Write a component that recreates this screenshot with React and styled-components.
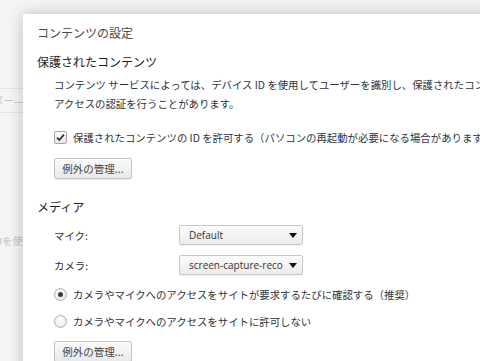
import React from 'react'
import styled, { createGlobalStyle } from 'styled-components'

const GlobalStyle = createGlobalStyle`
  html, body {
    margin: 0;
    padding: 0;
    background: #f4f4f4;
  }
  body {
    font-family: "Noto Sans CJK JP", "Open Sans", sans-serif;
  }
`

const Screen = styled.div`
  position: relative;
  width: 480px;
  height: 361px;
  overflow: hidden;
  background: #f4f4f4;
`

// page behind the overlay
const BackPage = styled.div`
  width: 23px;
  height: 100%;
  display: flex;
  flex-direction: column;
  overflow: hidden;
`

const BackField = styled.div`
  margin-top: 88px;
  height: 23px;
  border-top: 1px solid #e2e2e2;
  border-bottom: 1px solid #e2e2e2;
  display: flex;
  justify-content: flex-end;
  align-items: center;
  white-space: nowrap;
  font-size: 10.5px;
  color: #c4c4c4;
`

const BackText = styled.div`
  margin-top: 120px;
  display: flex;
  justify-content: flex-end;
  white-space: nowrap;
  font-size: 10.5px;
  color: #c4c4c4;
`

const Dialog = styled.div`
  position: absolute;
  left: 23px;
  top: 14px;
  width: 520px;
  height: 400px;
  background: #fff;
  box-shadow: 0 0 14px rgba(0, 0, 0, 0.22);
  padding: 9px 0 0 14px;
  box-sizing: border-box;
  display: flex;
  flex-direction: column;
  color: #2c333a;
`

const Title = styled.h1`
  margin: 0;
  font-size: 12px;
  font-weight: normal;
  line-height: 20px;
  color: #4a4a4a;
`

const Heading = styled.h2`
  margin: ${p => p.$top}px 0 0;
  font-size: 12px;
  font-weight: normal;
  line-height: 20px;
  color: #1e1e1e;
`

const Section = styled.div`
  padding-left: 17px;
  display: flex;
  flex-direction: column;
  font-size: 10.4px;
  white-space: nowrap;
`

const Para = styled.p`
  margin: 3px 0 0;
  line-height: 19px;
`

const CheckRow = styled.label`
  margin-top: ${p => p.$top}px;
  height: 20px;
  display: flex;
  align-items: center;
  gap: 6px;
`

const CheckBox = styled.span`
  width: 11px;
  height: 11px;
  border: 1px solid #a4a4a4;
  border-radius: 2px;
  background: linear-gradient(#fdfdfd, #e6e6e6);
  display: flex;
  align-items: center;
  justify-content: center;
  flex-shrink: 0;
`

const Radio = styled.span`
  width: 11px;
  height: 11px;
  border: 1px solid #b0b0b0;
  border-radius: 50%;
  background: radial-gradient(circle at 50% 35%, #ffffff, #e2e2e2);
  display: flex;
  align-items: center;
  justify-content: center;
  flex-shrink: 0;

  &::after {
    content: '';
    width: 5px;
    height: 5px;
    border-radius: 50%;
    background: ${p => (p.$on ? '#3a3a3a' : 'transparent')};
  }
`

const Button = styled.button`
  margin-top: ${p => p.$top}px;
  align-self: flex-start;
  width: 78px;
  height: 21px;
  padding: 0;
  border: 1px solid #c4c4c4;
  border-radius: 2px;
  background: linear-gradient(#fafafa, #e9e9e9);
  box-shadow: 0 1px 0 rgba(0, 0, 0, 0.06);
  font-family: "Noto Sans CJK JP", sans-serif;
  font-size: 10.5px;
  color: #444;
`

const FieldRow = styled.div`
  margin-top: ${p => p.$top}px;
  height: 20px;
  display: grid;
  grid-template-columns: 125px 124px;
  align-items: center;
`

const Select = styled.div`
  height: 20px;
  box-sizing: border-box;
  border: 1px solid #c8c8c8;
  border-radius: 2px;
  background: linear-gradient(#fbfbfb, #ececec);
  box-shadow: 0 1px 0 rgba(0, 0, 0, 0.05);
  display: flex;
  align-items: center;
  padding: 0 5px 0 9px;
  gap: 6px;
  font-family: "Open Sans", "Noto Sans CJK JP", sans-serif;
  font-size: 10px;
  color: #333;
`

const SelectText = styled.span`
  flex: 1;
  overflow: hidden;
  white-space: nowrap;
`

const Arrow = () => (
  <svg width="8" height="5" viewBox="0 0 8 5">
    <path d="M0 0h8L4 5z" fill="#111" />
  </svg>
)

const Check = () => (
  <svg width="9" height="9" viewBox="0 0 9 9">
    <path d="M1 4.6l2.3 2.4L8 1.6" fill="none" stroke="#333" strokeWidth="1.8" />
  </svg>
)

const App = () => {
  return (
    <Screen>
      <GlobalStyle />
      <BackPage>
        <BackField>ショッポー—</BackField>
        <BackText>IDを使</BackText>
      </BackPage>

      <Dialog>
        <Title>コンテンツの設定</Title>

        <Heading $top={9}>保護されたコンテンツ</Heading>
        <Section>
          <Para>
            コンテンツ サービスによっては、デバイス ID を使用してユーザーを識別し、保護されたコンテンツへの
            <br />
            アクセスの認証を行うことがあります。
          </Para>
          <CheckRow $top={14}>
            <CheckBox><Check /></CheckBox>
            保護されたコンテンツの ID を許可する（パソコンの再起動が必要になる場合があります）
          </CheckRow>
          <Button $top={11}>例外の管理...</Button>
        </Section>

        <Heading $top={18}>メディア</Heading>
        <Section>
          <FieldRow $top={8}>
            <span>マイク:</span>
            <Select>
              <SelectText>Default</SelectText>
              <Arrow />
            </Select>
          </FieldRow>
          <FieldRow $top={10}>
            <span>カメラ:</span>
            <Select>
              <SelectText>screen-capture-reco</SelectText>
              <Arrow />
            </Select>
          </FieldRow>
          <CheckRow $top={9}>
            <Radio $on />
            カメラやマイクへのアクセスをサイトが要求するたびに確認する（推奨）
          </CheckRow>
          <CheckRow $top={7}>
            <Radio />
            カメラやマイクへのアクセスをサイトに許可しない
          </CheckRow>
          <Button $top={10}>例外の管理...</Button>
        </Section>
      </Dialog>
    </Screen>
  )
}

export default App
